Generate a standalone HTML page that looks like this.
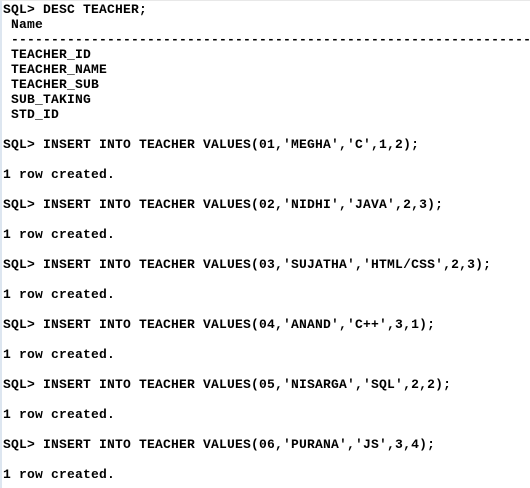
<!DOCTYPE html>
<html><head><style>
html,body{margin:0;padding:0;background:#fff;width:530px;height:488px;overflow:hidden}
body{border-top:1px solid #e8e8e8;border-left:2px solid #dde6f0;box-sizing:border-box}
pre{margin:0;padding:1px 0 0 1px;font-family:"Liberation Mono",monospace;font-weight:bold;font-size:13px;letter-spacing:0.2px;line-height:15px;color:#000;white-space:pre}
</style></head><body><pre>SQL&gt; DESC TEACHER;
 Name
 -----------------------------------------------------------------
 TEACHER_ID
 TEACHER_NAME
 TEACHER_SUB
 SUB_TAKING
 STD_ID

SQL&gt; INSERT INTO TEACHER VALUES(01,'MEGHA','C',1,2);

1 row created.

SQL&gt; INSERT INTO TEACHER VALUES(02,'NIDHI','JAVA',2,3);

1 row created.

SQL&gt; INSERT INTO TEACHER VALUES(03,'SUJATHA','HTML/CSS',2,3);

1 row created.

SQL&gt; INSERT INTO TEACHER VALUES(04,'ANAND','C++',3,1);

1 row created.

SQL&gt; INSERT INTO TEACHER VALUES(05,'NISARGA','SQL',2,2);

1 row created.

SQL&gt; INSERT INTO TEACHER VALUES(06,'PURANA','JS',3,4);

1 row created.
</pre></body></html>
